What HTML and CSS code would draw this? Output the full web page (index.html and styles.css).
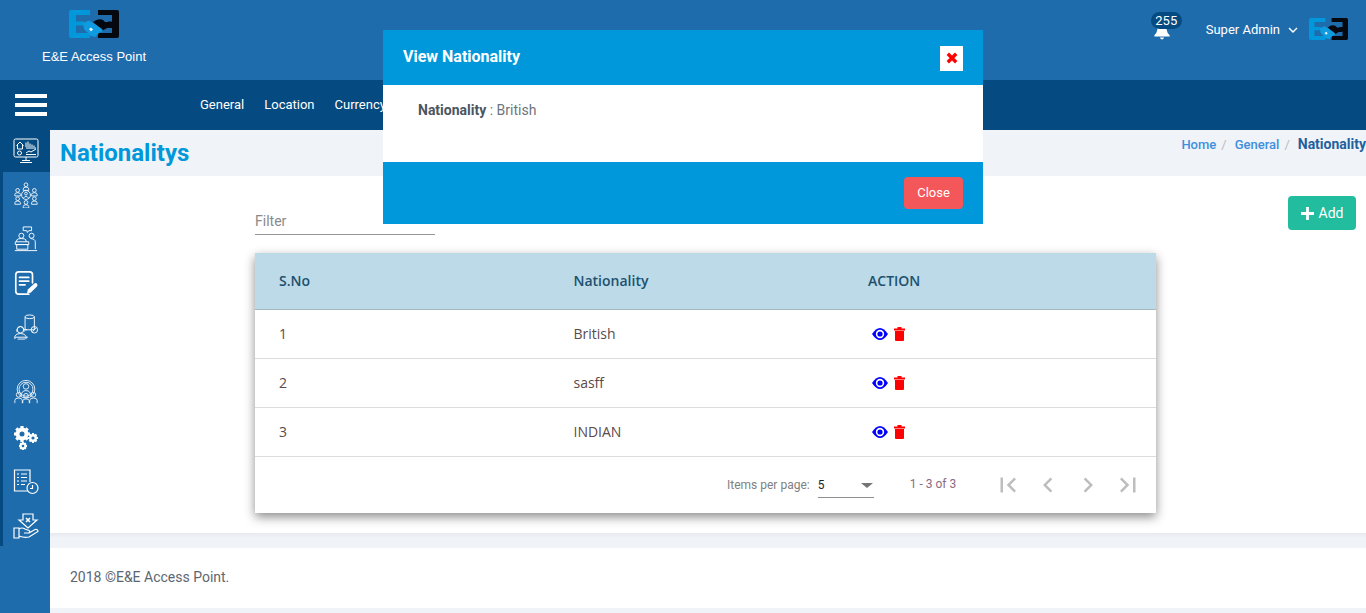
FILE: index.html
```html
<!DOCTYPE html>
<html lang="en">
<head>
<meta charset="utf-8">
<title>Nationalitys</title>
<link rel="stylesheet" href="styles.css">
</head>
<body>
<svg class="defs" width="0" height="0" aria-hidden="true">
  <symbol id="logo" viewBox="0 0 50 28">
    <path d="M0 2Q0 0 2 0H21V5H7V11.500H15V15.500H7V23H21V28H2Q0 28 0 26Z" fill="#0098da"/>
    <path d="M29 0H48Q50 0 50 2V26Q50 28 48 28H29V23H43V16.500H39V11.500H43V5H29Z" fill="#05080f"/>
    <path d="M24 12Q29 8 34 10L36 12H43V18H38L33 21L27 15Z" fill="#05080f"/>
    <path d="M14 13L20 10.500L26 14L33 19L34 21L30 23L26 27L22 26L15 19Z" fill="#0f9be0"/>
    <path d="M20 19L22 17.500L24 19.500L22 21.500Z" fill="#e9f6ff"/>
  </symbol>
  <symbol id="eye" viewBox="0 0 16 12">
    <path d="M0 6Q4 0 8 0T16 6Q12 12 8 12T0 6Z" fill="#0000ff"/>
    <circle cx="8" cy="6" r="4.200" fill="#fff"/>
    <circle cx="8" cy="6" r="2.600" fill="#0000ff"/>
  </symbol>
  <symbol id="trash" viewBox="0 0 11 14">
    <path d="M0 1.500H3.500V0H7.500V1.500H11V3.500H0ZM1 4H10V13Q10 14 9 14H2Q1 14 1 13Z" fill="#ff0000"/>
  </symbol>
</svg>

<header class="top">
  <div class="brand">
    <svg class="logo-lg"><use href="#logo"/></svg>
    <span class="brand-name">E&amp;E Access Point</span>
  </div>
  <div class="user">
    <div class="bell">
      <svg class="bell-icon" viewBox="0 0 18 20"><path d="M9 1Q14 1 14.500 8Q15 12 18 14.500V16H0V14.500Q3 12 3.500 8Q4 1 9 1ZM6.500 17H11.500Q10.500 19.500 9 19.500T6.500 17Z" fill="#fff"/></svg>
      <span class="badge">255</span>
    </div>
    <span class="user-name">Super Admin</span>
    <svg class="chev" viewBox="0 0 10 6"><path d="M1 1L5 5L9 1" fill="none" stroke="#fff" stroke-width="1.400"/></svg>
    <svg class="logo-sm"><use href="#logo"/></svg>
  </div>
</header>

<nav class="bar">
  <div class="burger"><i></i><i></i><i></i></div>
  <ul class="menu">
    <li>General</li>
    <li>Location</li>
    <li>Currency</li>
  </ul>
</nav>

<div class="main">
  <aside class="side">
    <div class="side-first">
      <svg class="ico" viewBox="0 0 26 26"><g fill="none" stroke="#fff" stroke-width="1"><rect x="1" y="1" width="24" height="18" rx="1.500"/><path d="M3.500 7.500L7 4L10.500 7.500M4.500 7V11H9.500V7M13 9V4.500M15 9V3.500M17 9V5.500M19 9V6.500M21 9V7.500M13 10H23M13 15L16 13L18 14L23 11M13 16.500H23"/><circle cx="6.500" cy="15" r="2"/><path d="M13 19V22M9 22.500H17M7 24.500H19"/></g></svg>
    </div>
    <div class="side-rest">
      <div class="side-group">
        <svg class="ico" viewBox="0 0 26 28"><g fill="none" stroke="#fff" stroke-width=".9"><circle cx="13" cy="14" r="4.800"/><circle cx="13" cy="12.500" r="1.500"/><path d="M10 17.500Q13 13.500 16 17.500"/><circle cx="13" cy="3" r="2"/><path d="M10 9V7.500Q10 5.500 13 5.500T16 7.500V9Z"/><circle cx="13" cy="22" r="2"/><path d="M10 28V26.500Q10 24.500 13 24.500T16 26.500V28Z"/><circle cx="4" cy="9" r="2"/><path d="M1 15V13.500Q1 11.500 4 11.500T7 13.500V15Z"/><circle cx="22" cy="9" r="2"/><path d="M19 15V13.500Q19 11.500 22 11.500T25 13.500V15Z"/><circle cx="4" cy="18" r="2"/><path d="M1 24V22.500Q1 20.500 4 20.500T7 22.500V24Z"/><circle cx="22" cy="18" r="2"/><path d="M19 24V22.500Q19 20.500 22 20.500T25 22.500V24Z"/></g></svg>
        <svg class="ico" viewBox="0 0 26 28"><g fill="none" stroke="#fff" stroke-width="1"><path d="M10 1H19V5H16L14.500 7L14 5H10Z"/><circle cx="8" cy="10.500" r="2.700"/><circle cx="19" cy="10.500" r="2.700"/><path d="M3 17V15Q4 13.500 8 13.500Q12 13.500 13 15V17M18 13.500Q23 14 23 17V25M1.500 17H16V20H1.500ZM3 20H15V25H3ZM1 26.500H25"/></g></svg>
        <svg class="ico" viewBox="0 0 26 28"><g fill="none" stroke="#fff" stroke-width="1.800" stroke-linecap="round"><path d="M16 26H5Q2 26 2 23V5Q2 2 5 2H17Q20 2 20 5V14"/><path d="M6 8H16M6 12H16M6 16H12"/></g><path d="M14 25L15 21L22 14.500Q24 13.500 25 15T24.500 18L18 24.500Z" fill="#fff"/></svg>
        <svg class="ico" viewBox="0 0 26 28"><g fill="none" stroke="#fff" stroke-width="1"><path d="M12 3Q12 1 17 1T22 3V17H12Z"/><path d="M12 3Q12 5 17 5T22 3"/><circle cx="22" cy="17" r="3.500"/><path d="M20 19L24 15M10 17H14"/><circle cx="7" cy="17" r="3.500"/><path d="M3 19Q3 14 7 13.500Q11 14 11 19M1 27V24Q2 21 7 21Q12 21 13 24V27M1 25H15M4 27H12"/></g></svg>
      </div>
      <div class="side-group side-group-low">
        <svg class="ico" viewBox="0 0 26 28"><g fill="none" stroke="#fff" stroke-width=".9"><circle cx="13" cy="11" r="9.500"/><circle cx="13" cy="11" r="7.500"/><circle cx="13" cy="8" r="3"/><path d="M8 18Q8 12.500 13 12.500T18 18"/><circle cx="5" cy="17" r="2.500"/><circle cx="21" cy="17" r="2.500"/><path d="M1 26V23Q1 20.500 5 20.500T9 23V26M17 26V23Q17 20.500 21 20.500T25 23V26"/><circle cx="13" cy="18" r="2.500"/><path d="M9.500 26V23.500Q9.500 21.500 13 21.500T16.500 23.500V26"/></g></svg>
        <svg class="ico ico-gear" viewBox="0 0 26 26"><g fill="none" stroke="#fff" stroke-linecap="butt"><circle cx="9" cy="9" r="4.500" stroke-width="4"/><path d="M9 1V3M9 15V17M1 9H3M15 9H17M3.300 3.300L4.800 4.800M13.200 13.200L14.700 14.700M3.300 14.700L4.800 13.200M13.200 4.800L14.700 3.300" stroke-width="3.200"/><circle cx="20" cy="13" r="2.800" stroke-width="2.400"/><path d="M20 8V9.500M20 16.500V18M15 13H16.500M23.500 13H25M16.500 9.500L17.500 10.500M22.500 15.500L23.500 16.500M16.500 16.500L17.500 15.500M22.500 10.500L23.500 9.500" stroke-width="2"/><circle cx="10" cy="21" r="2.400" stroke-width="2.200"/><path d="M10 17V18M10 24V25M6 21H7M13 21H14M7.200 18.200L8 19M12 23L12.800 23.800M7.200 23.800L8 23M12 19L12.800 18.200" stroke-width="1.800"/></g></svg>
        <svg class="ico" viewBox="0 0 26 26"><g fill="none" stroke="#fff" stroke-width="1.200"><path d="M16 22H1.500V1H17V13"/><path d="M4 5H6M8 5H14M4 8.500H6M8 8.500H14M4 12H6M8 12H14M4 15.500H6M8 15.500H12"/><circle cx="19.500" cy="19" r="5.500" fill="#1f6cad"/><path d="M19.500 16V19.500H17"/></g></svg>
        <svg class="ico" viewBox="0 0 26 26"><g fill="none" stroke="#fff" stroke-width="1.200"><path d="M10 1H20V7H24L15 15L6 7H10Z"/><path d="M13 5L17 9M17 5L13 9" stroke-width="1.500"/><path d="M1 15H6V25H1ZM6 16Q9 14 12 16L16 17.500Q18 19 15 20H11M6 23Q11 25 16 24L25 18.500Q25 16 22 16.500L16 20"/></g></svg>
      </div>
    </div>
  </aside>

  <div class="content">
    <div class="title-strip">
      <h1 class="page-title">Nationalitys</h1>
      <ol class="crumbs">
        <li class="crumb-link">Home</li><li class="crumb-sep">/</li>
        <li class="crumb-link">General</li><li class="crumb-sep">/</li>
        <li class="crumb-current">Nationality</li>
      </ol>
    </div>

    <section class="panel">
      <div class="tools">
        <div class="filter">Filter</div>
        <button class="add" type="button"><svg class="add-plus" viewBox="0 0 14 14"><path d="M5.500 0H8.500V5.500H14V8.500H8.500V14H5.500V8.500H0V5.500H5.500Z" fill="#fff"/></svg>Add</button>
      </div>

      <div class="card">
        <div class="row row-head"><span>S.No</span><span>Nationality</span><span>ACTION</span></div>
        <div class="row"><span>1</span><span>British</span><span class="acts"><svg class="eye"><use href="#eye"/></svg><svg class="trash"><use href="#trash"/></svg></span></div>
        <div class="row"><span>2</span><span>sasff</span><span class="acts"><svg class="eye"><use href="#eye"/></svg><svg class="trash"><use href="#trash"/></svg></span></div>
        <div class="row"><span>3</span><span>INDIAN</span><span class="acts"><svg class="eye"><use href="#eye"/></svg><svg class="trash"><use href="#trash"/></svg></span></div>
        <div class="pager">
          <span class="pg-label">Items per page:</span>
          <div class="pg-select"><span>5</span><i class="pg-arrow"></i></div>
          <span class="pg-range">1 - 3 of 3</span>
          <div class="pg-btns">
            <svg viewBox="0 0 24 24"><path d="M18.400 16.600L13.800 12L18.400 7.400L17 6L11 12L17 18ZM6 6H8V18H6Z" fill="#bdbdbd"/></svg>
            <svg viewBox="0 0 24 24"><path d="M15.400 7.400L14 6L8 12L14 18L15.400 16.600L10.800 12Z" fill="#bdbdbd"/></svg>
            <svg viewBox="0 0 24 24"><path d="M10 6L8.600 7.400L13.200 12L8.600 16.600L10 18L16 12Z" fill="#bdbdbd"/></svg>
            <svg viewBox="0 0 24 24"><path d="M5.600 7.400L10.200 12L5.600 16.600L7 18L13 12L7 6ZM16 6H18V18H16Z" fill="#bdbdbd"/></svg>
          </div>
        </div>
      </div>
    </section>

    <div class="gap"></div>
    <footer class="foot">2018 ©E&amp;E Access Point.</footer>
  </div>
</div>

<div class="modal">
  <div class="modal-head">
    <h2 class="modal-title">View Nationality</h2>
    <button class="modal-x" type="button"><svg viewBox="0 0 10 10"><path d="M1.500 1.500L8.500 8.500M8.500 1.500L1.500 8.500" stroke="#ff0000" stroke-width="2.800"/></svg></button>
  </div>
  <div class="modal-body"><b>Nationality</b> : British</div>
  <div class="modal-foot"><button class="modal-close" type="button">Close</button></div>
</div>
</body>
</html>
```

FILE: styles.css
```css
* { box-sizing: border-box; }
html, body { margin: 0; height: 613px; overflow: hidden; }
body { font-family: Roboto, "Liberation Sans", sans-serif; background: #f0f3f8; color: #333; position: relative; }
.defs { position: absolute; }

.top { height: 80px; background: #1f6cad; display: flex; justify-content: space-between; color: #fff; }
.brand { width: 188px; display: flex; flex-direction: column; align-items: center; padding-top: 10px; }
.logo-lg { width: 50px; height: 28px; }
.brand-name { font-family: "Liberation Sans", Arial, sans-serif; font-size: 13px; line-height: 16px; margin-top: 11px; }
.user { display: flex; align-items: flex-start; padding: 18px 18px 0 0; }
.bell { position: relative; width: 18px; height: 22px; margin-right: 35px; margin-top: 3px; }
.bell-icon { position: absolute; left: 0; top: 2px; width: 18px; height: 17px; }
.badge { position: absolute; left: -2px; top: -9px; width: 31px; height: 17px; border-radius: 9px; background: #054a80; font-size: 13px; line-height: 17px; text-align: center; }
.user-name { font-size: 13px; line-height: 23px; }
.chev { width: 10px; height: 6px; margin: 9px 0 0 8px; }
.logo-sm { width: 39px; height: 22px; margin-left: 11px; }

.bar { height: 50px; background: #054a80; display: flex; align-items: center; color: #fff; }
.burger { width: 32px; margin-left: 15px; display: flex; flex-direction: column; gap: 5px; }
.burger i { display: block; height: 4px; background: #fff; }
.menu { list-style: none; margin: 0 0 0 153px; padding: 0; display: flex; gap: 20px; font-size: 13px; line-height: 20px; }

.main { display: flex; height: 483px; }
.side { width: 50px; background: #1f6cad; flex: none; }
.side-first { height: 42px; background: #054a80; display: flex; justify-content: center; padding: 8px 0 0 2px; }
.side-rest { height: 374px; border-left: 3px solid #054a80; display: flex; flex-direction: column; padding: 10px 0 0 0; }
.side-group { display: flex; flex-direction: column; align-items: center; gap: 18px; padding-right: 1px; }
.side-group-low { margin-top: 39px; }
.ico { width: 26px; height: 26px; display: block; flex: none; }
.ico-gear { margin-top: 2px; }

.content { flex: 1; min-width: 0; display: flex; flex-direction: column; }
.title-strip { height: 46px; background: #f0f3f8; display: flex; justify-content: space-between; flex: none; }
.page-title { margin: 7px 0 0 10px; font-size: 24px; line-height: 32px; font-weight: 700; color: #0098da; }
.crumbs { list-style: none; margin: 6px 0 0 0; padding: 0; display: flex; font-size: 13px; line-height: 17px; font-weight: 500; flex: none; white-space: nowrap; }
.crumb-link { color: #3f8fdc; }
.crumb-sep { color: #bbb; font-weight: 400; margin: 0 8px 0 5px; }
.crumb-current { color: #24609c; font-size: 14px; font-weight: 700; }

.panel { height: 357px; background: #fff; padding: 20px 10px 0 205px; flex: none; }
.tools { display: flex; justify-content: space-between; height: 57px; }
.filter { width: 180px; height: 39px; border-bottom: 1px solid #949494; font-size: 14px; line-height: 50px; color: #8a8a8a; overflow: hidden; }
.add { width: 68px; height: 34px; border: 0; border-radius: 4px; background: #22bc9f; color: #fff; font: 400 14px/34px Roboto, sans-serif; padding: 0; display: flex; align-items: center; justify-content: center; gap: 5px; }
.add-plus { width: 13px; height: 13px; }

.card { width: 901px; background: #fff; box-shadow: 0 4px 10px rgba(0,0,0,.45); font-family: "Open Sans", sans-serif; font-size: 14px; color: #5c4a4a; }
.row { display: grid; grid-template-columns: 294.500px 294.500px 1fr; padding: 0 0 2px 24px; height: 49px; align-items: center; border-bottom: 1px solid #dcdcdc; }
.row-head { height: 57px; background: #bcdae7; color: #20506f; font-weight: 600; border-bottom-color: #a9b8c0; }
.acts { display: flex; align-items: center; gap: 6px; padding-left: 4px; margin-top: 1px; }
.eye { width: 16px; height: 12px; }
.trash { width: 11px; height: 14px; }

.pager { height: 56px; display: flex; align-items: center; font-family: Roboto, sans-serif; font-size: 12px; color: #808080; }
.pg-label { margin-left: 472px; }
.pg-select { width: 56px; height: 25px; margin-left: 8px; border-bottom: 1px solid #8f8f8f; display: flex; justify-content: space-between; align-items: center; color: #222; padding: 0 1px 0 0; margin-top: 1px; }
.pg-arrow { width: 0; height: 0; border-left: 6px solid transparent; border-right: 6px solid transparent; border-top: 5px solid #757575; }
.pg-range { margin-left: 36px; margin-top: -3px; color: #8b6a80; }
.pg-btns { margin-left: 37px; display: flex; gap: 10px; }
.pg-btns svg { width: 30px; height: 30px; }

.gap { height: 15px; background: linear-gradient(#e6e9ef, #f0f3f8 5px); flex: none; }
.foot { height: 60px; background: #fff; padding-left: 20px; font-size: 14px; line-height: 58px; color: #5d6670; flex: none; }

.modal { position: absolute; left: 383px; top: 30px; width: 600px; height: 194px; display: flex; flex-direction: column; background: #fff; }
.modal-head { height: 55px; background: #0098da; display: flex; align-items: center; justify-content: space-between; padding: 0 20px; flex: none; }
.modal-title { margin: 0 0 3px; color: #fff; font-size: 16px; font-weight: 700; }
.modal-x { width: 23px; height: 25px; background: #fff; border: 0; padding: 0; display: flex; align-items: center; justify-content: center; margin-top: 1px; }
.modal-x svg { width: 12px; height: 12px; }
.modal-body { height: 77px; padding: 16px 35px; font-size: 14px; line-height: 18px; color: #6c757d; flex: none; }
.modal-body b { color: #4b5560; font-weight: 700; }
.modal-foot { height: 62px; background: #0098da; display: flex; justify-content: flex-end; align-items: flex-start; padding: 15px 20px 0 0; flex: none; }
.modal-close { width: 59px; height: 32px; border: 0; border-radius: 4px; background: #f4575a; color: #fff; font: 400 13px/32px Roboto, sans-serif; padding: 0; }
```
